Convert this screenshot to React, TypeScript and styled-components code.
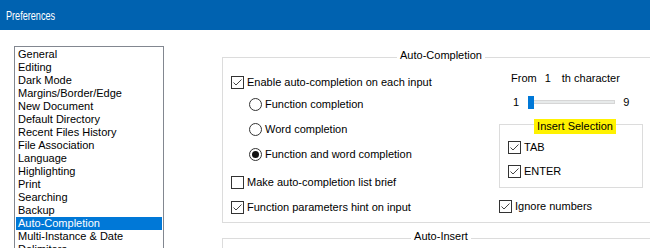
import styled, { createGlobalStyle } from 'styled-components';

const GlobalStyle = createGlobalStyle`
	html, body {
		margin: 0;
		padding: 0;
		background: #ffffff;
	}
	body {
		font-family: 'Liberation Sans', Arial, sans-serif;
		font-size: 11px;
		color: #000000;
	}
`;

const Window = styled.div`
	width: 650px;
	height: 248px;
	overflow: hidden;
	background: #ffffff;
`;

const TitleBar = styled.div`
	height: 30px;
	display: flex;
	align-items: center;
	padding-left: 6px;
	background: #0062b0;
	color: #ffffff;
	font-size: 13px;
`;

const TitleText = styled.span`
	display: inline-block;
	transform: scaleX(0.7);
	transform-origin: left center;
`;

const Body = styled.div`
	display: flex;
	align-items: flex-start;
	padding: 16px 0 0 14px;
	height: 218px;
	box-sizing: border-box;
`;

const CategoryList = styled.ul`
	list-style: none;
	margin: 0;
	padding: 1px;
	width: 150px;
	height: 240px;
	box-sizing: border-box;
	border: 1px solid #828790;
	flex-shrink: 0;
`;

const CategoryItem = styled.li<{ $selected?: boolean }>`
	height: 13px;
	line-height: 13px;
	padding-left: 2px;
	white-space: nowrap;
	background: ${(p) => (p.$selected ? '#0078d7' : 'transparent')};
	color: ${(p) => (p.$selected ? '#ffffff' : '#000000')};
`;

const Panels = styled.div`
	margin: 11px 0 0 58px;
	width: 438px;
	flex-shrink: 0;
	display: flex;
	flex-direction: column;
	gap: 15px;
`;

const GroupBox = styled.div<{ $width?: number }>`
	border: 1px solid #dcdcdc;
	width: ${(p) => (p.$width ? `${p.$width}px` : 'auto')};
	box-sizing: border-box;
`;

const Caption = styled.div<{ $highlight?: boolean }>`
	display: table;
	margin: ${(p) => (p.$highlight ? '-6px' : '-9px')} auto 0;
	padding: 0 3px;
	line-height: ${(p) => (p.$highlight ? '15px' : '13px')};
	background: ${(p) => (p.$highlight ? '#fff200' : '#ffffff')};
`;

const GroupGrid = styled.div`
	display: grid;
	grid-template-columns: 268px 1fr;
	padding: 0 0 8px 8px;
`;

const Column = styled.div`
	display: flex;
	flex-direction: column;
	align-items: flex-start;
`;

const Option = styled.label<{ $top: number; $indent?: number }>`
	display: flex;
	align-items: center;
	gap: 3px;
	height: 13px;
	line-height: 13px;
	margin-top: ${(p) => p.$top}px;
	margin-left: ${(p) => p.$indent ?? 0}px;
	white-space: nowrap;
`;

const Box = styled.span`
	width: 13px;
	height: 13px;
	box-sizing: border-box;
	border: 1px solid #333333;
	background: #ffffff;
	display: inline-flex;
	align-items: center;
	justify-content: center;
	flex-shrink: 0;
`;

const Radio = styled(Box)`
	border-radius: 50%;
`;

const Dot = styled.span`
	width: 7px;
	height: 7px;
	border-radius: 50%;
	background: #111111;
`;

const FromRow = styled.div`
	display: flex;
	align-items: center;
	height: 13px;
	line-height: 13px;
	margin: 10px 0 0 12px;
	white-space: nowrap;
`;

const FromValue = styled.span`
	margin: 0 11px 0 8px;
`;

const SliderRow = styled.div`
	display: flex;
	align-items: center;
	height: 13px;
	margin: 10px 0 0 14px;
	gap: 9px;
`;

const SliderTrack = styled.div`
	position: relative;
	width: 87px;
	height: 4px;
	box-sizing: border-box;
	background: #e7eaea;
	border: 1px solid #d6d6d6;
	margin-right: -1px;
`;

const SliderThumb = styled.span`
	position: absolute;
	top: -5px;
	width: 6px;
	height: 13px;
	margin-left: -1px;
	background: #0078d7;
`;

const InsertBox = styled(GroupBox)`
	margin-top: 16px;
	padding: 0 0 9px 8px;
	display: flex;
	flex-direction: column;
`;

const Check = () => (
	<Box>
		<svg width='11' height='11' viewBox='0 0 11 11'>
			<path d='M1.5 5.5 L4 8 L9.5 2.5' fill='none' stroke='#444444' strokeWidth='1' />
		</svg>
	</Box>
);

const Unchecked = () => <Box />;

const RadioButton = ({ on }: { on?: boolean }) => <Radio>{on && <Dot />}</Radio>;

const categories = [
	'General',
	'Editing',
	'Dark Mode',
	'Margins/Border/Edge',
	'New Document',
	'Default Directory',
	'Recent Files History',
	'File Association',
	'Language',
	'Highlighting',
	'Print',
	'Searching',
	'Backup',
	'Auto-Completion',
	'Multi-Instance & Date',
	'Delimiters',
];

const sliderValue = 1;

const App = () => {
	return (
		<Window>
			<GlobalStyle />
			<TitleBar>
				<TitleText>Preferences</TitleText>
			</TitleBar>
			<Body>
				<CategoryList>
					{categories.map((item) => (
						<CategoryItem key={item} $selected={item === 'Auto-Completion'}>
							{item}
						</CategoryItem>
					))}
				</CategoryList>
				<Panels>
					<GroupBox>
						<Caption>Auto-Completion</Caption>
						<GroupGrid>
							<Column>
								<Option $top={14}>
									<Check />
									Enable auto-completion on each input
								</Option>
								<Option $top={9} $indent={18}>
									<RadioButton />
									Function completion
								</Option>
								<Option $top={12} $indent={18}>
									<RadioButton />
									Word completion
								</Option>
								<Option $top={12} $indent={18}>
									<RadioButton on />
									Function and word completion
								</Option>
								<Option $top={15}>
									<Unchecked />
									Make auto-completion list brief
								</Option>
								<Option $top={12}>
									<Check />
									Function parameters hint on input
								</Option>
							</Column>
							<Column>
								<FromRow>
									From
									<FromValue>{sliderValue}</FromValue>
									th character
								</FromRow>
								<SliderRow>
									<span>1</span>
									<SliderTrack>
										<SliderThumb style={{ left: `${((sliderValue - 1) / 8) * 100}%` }} />
									</SliderTrack>
									<span>9</span>
								</SliderRow>
								<InsertBox $width={144}>
									<Caption $highlight>Insert Selection</Caption>
									<Option $top={7}>
										<Check />
										TAB
									</Option>
									<Option $top={11}>
										<Check />
										ENTER
									</Option>
								</InsertBox>
								<Option $top={12}>
									<Check />
									Ignore numbers
								</Option>
							</Column>
						</GroupGrid>
					</GroupBox>
					<GroupBox>
						<Caption>Auto-Insert</Caption>
						<GroupGrid>
							<Column />
						</GroupGrid>
					</GroupBox>
				</Panels>
			</Body>
		</Window>
	);
};

export default App;
